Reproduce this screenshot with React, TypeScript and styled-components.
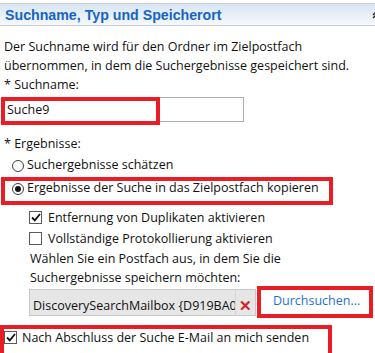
import React from "react";
import styled, { createGlobalStyle } from "styled-components";

const Global = createGlobalStyle`
  html, body { margin: 0; padding: 0; background: #fff; }
  body {
    font-family: "Open Sans", "Noto Sans", sans-serif;
    font-size: 12.5px;
    color: #111;
  }
  #root { width: 375px; height: 353px; overflow: hidden; }
`;

const Page = styled.div`
  position: relative;
  width: 375px;
  height: 353px;
  overflow: hidden;
  padding-top: 3px;
  box-sizing: border-box;
`;

const Header = styled.div`
  height: 21px;
  border-top: 1px solid #c8ced6;
  border-bottom: 1px solid #c8ced6;
  background: linear-gradient(#d8e5f2, #f5f8fb);
  display: flex;
  align-items: center;
  justify-content: space-between;
  padding-left: 5px;
`;

const Title = styled.h2`
  margin: 0;
  font: bold 14.2px "Liberation Sans", Arial, sans-serif;
  color: #1664c4;
`;

const Collapse = styled.svg`
  width: 8px;
  height: 8px;
  margin-right: -5px;
  flex: none;
`;

const Body = styled.div`
  padding: 11px 0 0 4px;
`;

const Line = styled.div<{ $indent?: number }>`
  line-height: 19px;
  white-space: nowrap;
  padding-left: ${(p) => p.$indent ?? 0}px;
`;

const Gap = styled.div<{ $h: number }>`
  height: ${(p) => p.$h}px;
`;

const FieldWrap = styled.div`
  position: relative;
  width: 240px;
  height: 25px;
`;

const TextInput = styled.input`
  box-sizing: border-box;
  width: 100%;
  height: 25px;
  margin: 0;
  border: 1px solid #abadb3;
  padding: 0 0 0 2px;
  font: inherit;
  color: #111;
  background: #fff;
  outline: none;
`;

const Mark = styled.div<{ $l: number; $t: number; $w: number; $h: number }>`
  position: absolute;
  left: ${(p) => p.$l}px;
  top: ${(p) => p.$t}px;
  width: ${(p) => p.$w}px;
  height: ${(p) => p.$h}px;
  box-sizing: border-box;
  border: 4px solid #e81d25;
  pointer-events: none;
`;

const Row = styled.div<{ $h: number; $indent?: number; $gap?: number }>`
  position: relative;
  display: flex;
  align-items: center;
  height: ${(p) => p.$h}px;
  line-height: ${(p) => p.$h}px;
  padding-left: ${(p) => p.$indent ?? 0}px;
  gap: ${(p) => p.$gap ?? 4}px;
  white-space: nowrap;
`;

const Radio = styled.span<{ $on?: boolean }>`
  box-sizing: border-box;
  width: 12px;
  height: 12px;
  border-radius: 50%;
  border: 1px solid #3c3c3c;
  background: #fff;
  display: flex;
  align-items: center;
  justify-content: center;
  flex: none;
  margin-top: 2px;
  &::after {
    content: "";
    display: ${(p) => (p.$on ? "block" : "none")};
    width: 6px;
    height: 6px;
    border-radius: 50%;
    background: #111;
  }
`;

const Box = styled.span`
  box-sizing: border-box;
  width: 13px;
  height: 13px;
  border: 1px solid #5a5a5a;
  background: #fff;
  flex: none;
  position: relative;
  display: flex;
  align-items: center;
  justify-content: center;
  margin-top: -1px;
`;

const Check = () => (
  <svg width="10" height="9" viewBox="0 0 10 9">
    <path d="M1 4.5 L3.8 7.3 L9 1" fill="none" stroke="#111" strokeWidth="1.8" />
  </svg>
);

const PickerRow = styled.div`
  position: relative;
  display: flex;
  align-items: flex-start;
  padding-left: 25px;
  height: 27px;
`;

const Picker = styled.div`
  box-sizing: border-box;
  width: 227px;
  height: 27px;
  border: 1px solid #c8c8c8;
  background: #e6e6e6;
  display: flex;
  align-items: flex-start;
`;

const PickerText = styled.span`
  box-sizing: border-box;
  width: 206px;
  height: 25px;
  padding: 5px 0 0 3px;
  line-height: 21px;
  overflow: hidden;
  white-space: nowrap;
  border-right: 1px solid #d4d4d4;
`;

const Remove = styled.span`
  color: #d0232a;
  font: bold 15px "Liberation Sans", Arial, sans-serif;
  padding: 5px 0 0 3px;
  line-height: 21px;
`;

const Browse = styled.a`
  color: #1f6fd2;
  text-decoration: none;
  margin-left: 17px;
  margin-top: 2px;
  line-height: 19px;
  white-space: nowrap;
`;

export default function App() {
  return (
    <Page>
      <Global />
      <Header>
        <Title>Suchname, Typ und Speicherort</Title>
        <Collapse viewBox="0 0 8 8">
          <path d="M1 4 L4 1 L7 4 M1 7 L4 4 L7 7" fill="none" stroke="#222" strokeWidth="1.4" />
        </Collapse>
      </Header>
      <Body>
        <Line>Der Suchname wird für den Ordner im Zielpostfach</Line>
        <Line>übernommen, in dem die Suchergebnisse gespeichert sind.</Line>
        <Line>* Suchname:</Line>
        <Gap $h={3} />
        <FieldWrap>
          <TextInput readOnly value="Suche9" />
          <Mark $l={-3} $t={0} $w={159} $h={28} />
        </FieldWrap>
        <Gap $h={12} />
        <Line>* Ergebnisse:</Line>
        <Gap $h={1} />
        <Row $h={22} $indent={8} $gap={3}>
          <Radio />
          <span>Suchergebnisse schätzen</span>
        </Row>
        <Row $h={23} $indent={8} $gap={3}>
          <Radio $on />
          <span>Ergebnisse der Suche in das Zielpostfach kopieren</span>
          <Mark $l={-3} $t={1} $w={332} $h={28} />
        </Row>
        <Gap $h={8} />
        <Row $h={21} $indent={25} $gap={6}>
          <Box>
            <Check />
          </Box>
          <span>Entfernung von Duplikaten aktivieren</span>
        </Row>
        <Row $h={21} $indent={25} $gap={6}>
          <Box />
          <span>Vollständige Protokollierung aktivieren</span>
        </Row>
        <Line $indent={26}>Wählen Sie ein Postfach aus, in dem Sie die</Line>
        <Line $indent={26}>Suchergebnisse speichern möchten:</Line>
        <Gap $h={2} />
        <PickerRow>
          <Picker>
            <PickerText>DiscoverySearchMailbox {"{D919BA0"}</PickerText>
            <Remove>✕</Remove>
          </Picker>
          <Browse href="#">Durchsuchen...</Browse>
          <Mark $l={253} $t={-3} $w={116} $h={32} />
        </PickerRow>
        <Gap $h={10} />
        <Row $h={24} $indent={0} $gap={5}>
          <Box>
            <Check />
          </Box>
          <span>Nach Abschluss der Suche E-Mail an mich senden</span>
          <Mark $l={-4} $t={-1} $w={332} $h={34} />
        </Row>
      </Body>
    </Page>
  );
}
